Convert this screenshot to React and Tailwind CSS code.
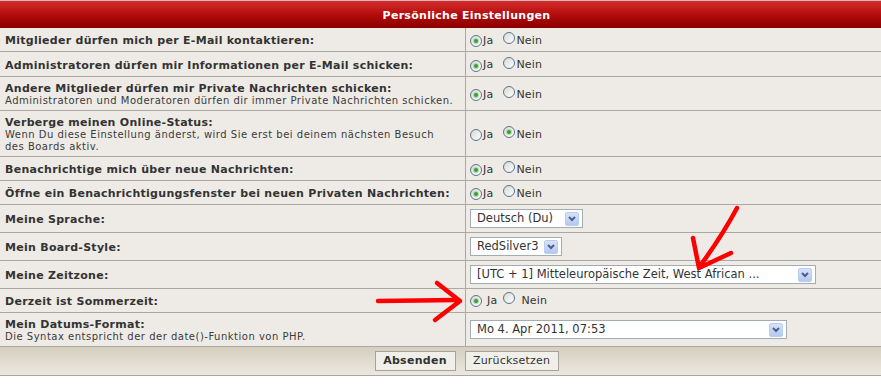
import React from 'react';

function Radio({ checked }) {
  return (
    <span className="relative inline-block w-[12px] h-[12px] shrink-0 rounded-full border border-[#5a7590] bg-gradient-to-br from-[#d8d8d2] to-white">
      {checked && <span className="absolute inset-[3px] rounded-full bg-[#3c9f3c] ring-1 ring-[#a8dca8]" />}
    </span>
  );
}

function YesNo({ yes, wide }) {
  if (wide) {
    return (
      <div className="flex items-center pt-[1px] text-[11px] text-[#333] tracking-[0.2px]">
        <Radio checked={yes} />
        <span className="ml-[5px]">Ja</span>
        <span className="ml-[6px]"><Radio checked={!yes} /></span>
        <span className="ml-[6px]">Nein</span>
      </div>
    );
  }
  return (
    <div className="flex items-center pt-[3px] text-[11px] text-[#333] tracking-[0.2px]">
      <Radio checked={yes} />
      <span className="ml-[1px]">Ja</span>
      <span className="ml-[10px]"><Radio checked={!yes} /></span>
      <span className="ml-[1px]">Nein</span>
    </div>
  );
}

function Select({ value, width }) {
  return (
    <div className={`flex items-center h-[19px] bg-white border border-[#a3abb3] pl-[6px] pr-[3px] ${width}`}>
      <span className="flex-1 text-[11.5px] text-[#333] whitespace-nowrap">{value}</span>
      <span className="flex items-center justify-center w-[14px] h-[14px] rounded-[2px] border border-[#b9cdf1] bg-gradient-to-b from-[#d6e2fb] to-[#b4c9f2]">
        <svg width="8" height="6" viewBox="0 0 8 6">
          <path d="M1 1 L4 4 L7 1" fill="none" stroke="#4d5f86" strokeWidth="2" />
        </svg>
      </span>
    </div>
  );
}

const rows = [
  { h: 'h-[24px]', label: 'Mitglieder dürfen mich per E-Mail kontaktieren:', right: <YesNo yes /> },
  { h: 'h-[25px]', label: 'Administratoren dürfen mir Informationen per E-Mail schicken:', right: <YesNo yes /> },
  {
    h: 'h-[34px]',
    label: 'Andere Mitglieder dürfen mir Private Nachrichten schicken:',
    note: ['Administratoren und Moderatoren dürfen dir immer Private Nachrichten schicken.'],
    right: <YesNo yes />,
  },
  {
    h: 'h-[46px]',
    label: 'Verberge meinen Online-Status:',
    note: ['Wenn Du diese Einstellung änderst, wird Sie erst bei deinem nächsten Besuch', 'des Boards aktiv.'],
    right: <YesNo yes={false} />,
  },
  { h: 'h-[24px]', label: 'Benachrichtige mich über neue Nachrichten:', right: <YesNo yes /> },
  { h: 'h-[24px]', label: 'Öffne ein Benachrichtigungsfenster bei neuen Privaten Nachrichten:', right: <YesNo yes /> },
  { h: 'h-[28px]', label: 'Meine Sprache:', right: <Select value="Deutsch (Du)" width="w-[113px]" /> },
  { h: 'h-[28px]', label: 'Mein Board-Style:', right: <Select value="RedSilver3" width="w-[92px]" /> },
  {
    h: 'h-[28px]',
    label: 'Meine Zeitzone:',
    right: <Select value="[UTC + 1] Mitteleuropäische Zeit, West African ..." width="w-[346px]" />,
  },
  { h: 'h-[24px]', label: 'Derzeit ist Sommerzeit:', right: <YesNo yes wide /> },
  {
    h: 'h-[34px]',
    label: 'Mein Datums-Format:',
    note: ['Die Syntax entspricht der der date()-Funktion von PHP.'],
    right: <Select value="Mo 4. Apr 2011, 07:53" width="w-[317px]" />,
  },
];

export default function App() {
  return (
    <div className="relative w-[881px] h-[385px] overflow-hidden bg-white font-['DejaVu_Sans',sans-serif]">
      <div className="w-[933px] bg-[#eeebe6]">
        <div className="h-[28px] flex items-center justify-center pt-[3px] border-t border-[#d8b8b8] bg-gradient-to-b from-[#d42a2a] via-[#b30c0c] to-[#8c0000] text-white text-[11px] font-bold tracking-[0.28px]">
          Persönliche Einstellungen
        </div>
        {rows.map((r) => (
          <div key={r.label} className={`flex border-b border-[#aba8a2] ${r.h}`}>
            <div className="w-[466px] shrink-0 flex flex-col justify-center pt-[2px] pl-[5px] border-r border-[#aba8a2]">
              <div className="text-[11px] font-bold text-[#333] leading-[13px] tracking-[0.28px]">{r.label}</div>
              {r.note &&
                r.note.map((line) => (
                  <div key={line} className="text-[10px] text-[#3a3a3a] leading-[12.5px] tracking-[0.5px] whitespace-nowrap">
                    {line}
                  </div>
                ))}
            </div>
            <div className="flex-1 flex items-center pl-[4px]">{r.right}</div>
          </div>
        ))}
        <div className="h-[29px] flex items-center justify-center gap-[9px] border-b border-[#aba8a2] bg-gradient-to-b from-[#d6cfbf] to-[#ece8e0]">
          <button className="h-[20px] w-[81px] border border-[#a5a29c] bg-[#f1efea] text-[11px] font-bold text-[#333] tracking-[0.28px]">Absenden</button>
          <button className="h-[20px] w-[94px] border border-[#a5a29c] bg-[#f1efea] text-[11px] text-[#333] tracking-[0.2px]">Zurücksetzen</button>
        </div>
      </div>
      <svg className="absolute inset-0 pointer-events-none" width="881" height="385">
        <g fill="none" stroke="#f00" strokeWidth="4.5" strokeLinecap="round" strokeLinejoin="round">
          <path d="M737 208 Q722 236 700 266" />
          <path d="M693 238 L699 268 L731 253" />
          <path d="M378 301 L457 300" />
          <path d="M437 283 L460 301 L435 320" />
        </g>
      </svg>
    </div>
  );
}
